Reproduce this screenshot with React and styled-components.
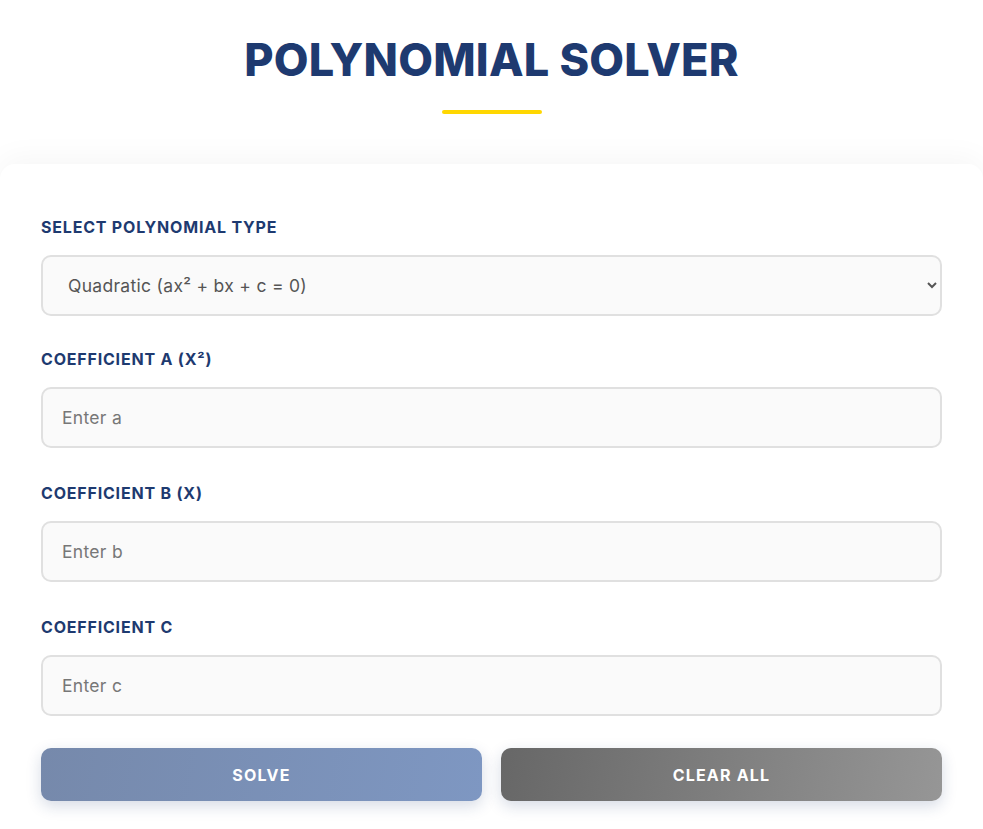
import React, { useState } from "react";
import styled, { createGlobalStyle } from "styled-components";

const GlobalStyle = createGlobalStyle`
  * { box-sizing: border-box; }
  body {
    margin: 0;
    background: #ffffff;
    font-family: "Inter", "Liberation Sans", sans-serif;
  }
`;

const Page = styled.div`
  min-height: 100vh;
  background: #ffffff;
`;

const Header = styled.header`
  display: flex;
  flex-direction: column;
  align-items: center;
  padding: 30px 0 50px;
`;

const Title = styled.h1`
  margin: 0;
  font-size: 45px;
  line-height: 60px;
  font-weight: 800;
  letter-spacing: 0.2px;
  color: #1e3a70;
`;

const Underline = styled.div`
  width: 100px;
  height: 4px;
  margin-top: 20px;
  border-radius: 2px;
  background: #ffd700;
`;

const Card = styled.main`
  background: #ffffff;
  border-radius: 15px 15px 0 0;
  box-shadow: 0 -6px 30px rgba(0, 0, 0, 0.04);
  padding: 53px 41px 40px;
`;

const Group = styled.div`
  display: flex;
  flex-direction: column;
  margin-bottom: 35px;

  &:first-child {
    margin-bottom: 33px;
  }
`;

const Label = styled.label`
  font-size: 16px;
  line-height: 20px;
  font-weight: 700;
  letter-spacing: 0.8px;
  text-transform: uppercase;
  color: #1e3a70;
  margin-bottom: 18px;
`;

const fieldCss = `
  width: 100%;
  height: 61px;
  border: 2px solid #e0e0e0;
  border-radius: 10px;
  background: #fafafa;
  font-family: "Inter", "Liberation Sans", sans-serif;
  font-size: 17.5px;
  letter-spacing: 0.3px;
  color: #555555;
  outline: none;
`;

const Select = styled.select`
  ${fieldCss}
  padding: 0 16px 0 21px;
`;

const Input = styled.input`
  ${fieldCss}
  padding: 0 19px;
  &::placeholder { color: #777777; }
`;

const Actions = styled.div`
  display: grid;
  grid-template-columns: 1fr 1fr;
  gap: 19px;
  margin-top: -3px;
`;

const Button = styled.button`
  height: 53px;
  border: none;
  border-radius: 10px;
  font-family: "Inter", "Liberation Sans", sans-serif;
  font-size: 16px;
  font-weight: 700;
  letter-spacing: 1.2px;
  color: #ffffff;
  text-transform: uppercase;
  cursor: pointer;
  background: ${(p) =>
    p.$variant === "clear"
      ? "linear-gradient(100deg, #676767, #969696)"
      : "linear-gradient(100deg, #7689ab, #7e97c2)"};
  box-shadow: 0 5px 15px rgba(30, 58, 112, 0.18);
`;

const coefficients = [
  { key: "a", label: "Coefficient A (x²)" },
  { key: "b", label: "Coefficient B (x)" },
  { key: "c", label: "Coefficient C" },
];

export default function App() {
  const [values, setValues] = useState({ a: "", b: "", c: "" });

  return (
    <Page>
      <GlobalStyle />
      <Header>
        <Title>POLYNOMIAL SOLVER</Title>
        <Underline />
      </Header>
      <Card>
        <Group>
          <Label>Select Polynomial Type</Label>
          <Select defaultValue="quadratic">
            <option value="linear">Linear (ax + b = 0)</option>
            <option value="quadratic">Quadratic (ax² + bx + c = 0)</option>
            <option value="cubic">Cubic (ax³ + bx² + cx + d = 0)</option>
          </Select>
        </Group>
        {coefficients.map((c) => (
          <Group key={c.key}>
            <Label>{c.label}</Label>
            <Input
              type="number"
              placeholder={`Enter ${c.key}`}
              value={values[c.key]}
              onChange={(e) => setValues({ ...values, [c.key]: e.target.value })}
            />
          </Group>
        ))}
        <Actions>
          <Button>Solve</Button>
          <Button $variant="clear">Clear All</Button>
        </Actions>
      </Card>
    </Page>
  );
}
